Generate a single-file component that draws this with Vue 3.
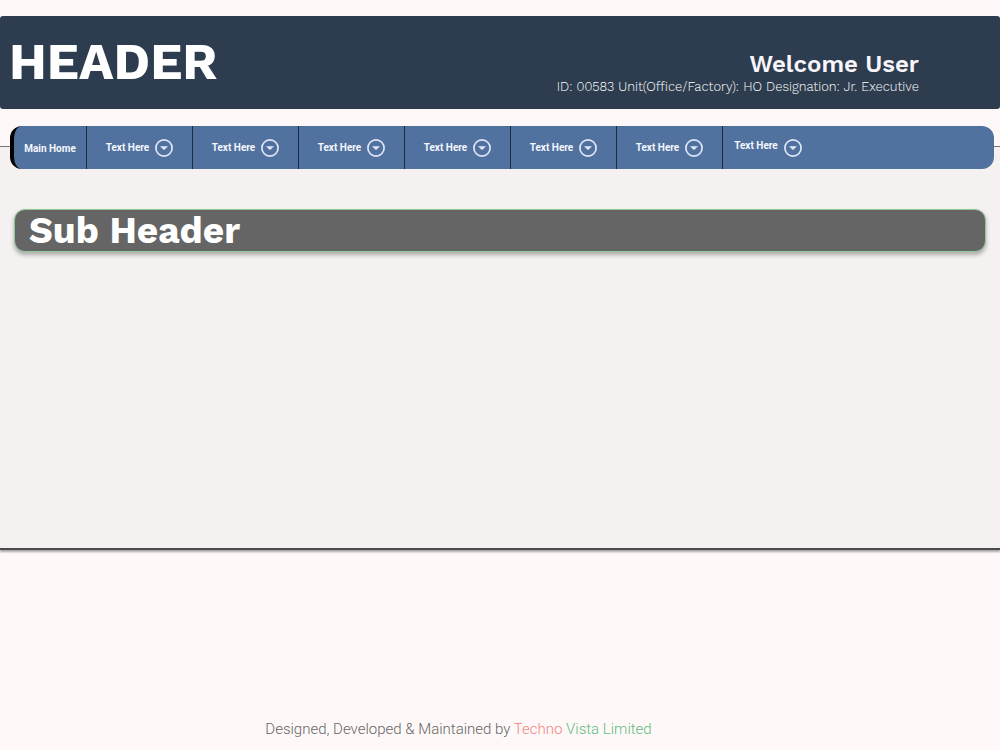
<script setup>
const menus = Array.from({ length: 7 }, (_, id) => ({ id, label: 'Text Here' }))
</script>

<template>
  <div class="page">
    <header class="banner">
      <h1>HEADER</h1>
      <div class="user">
        <p class="welcome">Welcome User</p>
        <p class="details">ID: 00583 Unit(Office/Factory): HO Designation: Jr. Executive</p>
      </div>
    </header>

    <main class="content">
      <nav class="menu">
        <a class="home" href="#">Main Home</a>
        <button v-for="menu in menus" :key="menu.id" class="item" type="button">
          <span>{{ menu.label }}</span>
          <svg viewBox="0 0 18 18" width="18" height="18" aria-hidden="true">
            <circle cx="9" cy="9" r="8.1" fill="none" stroke="#dfe7f8" stroke-width="1.7" />
            <path d="M5 7.2h8L9.7 10.4q-.7.6-1.4 0z" fill="#dfe7f8" />
          </svg>
        </button>
      </nav>
      <h2>Sub Header</h2>
    </main>

    <footer class="credits">
      Designed, Developed &amp; Maintained by <span class="red">Techno</span> <span class="green">Vista Limited</span>
    </footer>
  </div>
</template>

<style>
body {
  margin: 0;
  background: #fef9f8;
}
</style>

<style scoped>
.page {
  box-sizing: border-box;
  min-height: 100vh;
  display: flex;
  flex-direction: column;
  padding: 16px 0 10px;
  font-family: Roboto, "Liberation Sans", sans-serif;
}

.banner {
  display: flex;
  justify-content: space-between;
  align-items: flex-start;
  box-sizing: border-box;
  min-height: 93px;
  padding: 16px 81px 0 9px;
  border-radius: 3px;
  background: #2d3d4f;
  color: #fff;
  font-family: "Work Sans", Inter, sans-serif;
}

h1 {
  margin: 0;
  font-size: 51px;
  line-height: 60px;
  font-weight: 700;
}

.user {
  padding-top: 16px;
  text-align: right;
}

.welcome {
  margin: 0;
  font-size: 24px;
  line-height: 32px;
  font-weight: 600;
  color: #f8f6fb;
}

.details {
  margin: 0;
  font-size: 13px;
  line-height: 14px;
  font-weight: 300;
  color: #fff;
}

.content {
  box-sizing: border-box;
  min-height: 404px;
  margin-top: 37px;
  border-top: 1px solid #777;
  border-bottom: 2px solid #4d4a4c;
  background: #f6f1f1;
  box-shadow: 0 2px 2px #a9a5a6;
}

.menu {
  position: relative;
  display: flex;
  height: 43px;
  margin: -21px 6px 0 10px;
  border-left: 4px solid #000;
  border-radius: 12px;
  background: #51729e;
}

.home,
.item {
  box-sizing: border-box;
  display: flex;
  align-items: center;
  justify-content: center;
  border: 0;
  border-right: 1px solid #1c2b40;
  padding: 0;
  background: none;
  color: #f5f7ff;
  font: 700 10px/12px Roboto, sans-serif;
  text-decoration: none;
}

.home {
  width: 73px;
  padding-top: 2px;
}

.item {
  width: 106px;
  gap: 6px;
}

.item span {
  padding-top: 1px;
}

.item:last-child {
  width: 90px;
  border-right: 0;
}

.item:last-child span {
  padding: 0 0 4px;
}

h2 {
  margin: 40px 14px 0;
  padding: 0 14px;
  border: 1px solid #8fc996;
  border-radius: 11px;
  background: #656565;
  box-shadow: 0 3px 4px #aaa;
  color: #fff;
  font: 700 37px/41px "Work Sans", Inter, sans-serif;
}

.credits {
  margin-top: auto;
  padding-right: 83px;
  text-align: center;
  font-size: 15px;
  line-height: 22px;
  font-weight: 300;
  color: #666;
}

.red {
  color: #ef8582;
}

.green {
  color: #62b982;
}
</style>
